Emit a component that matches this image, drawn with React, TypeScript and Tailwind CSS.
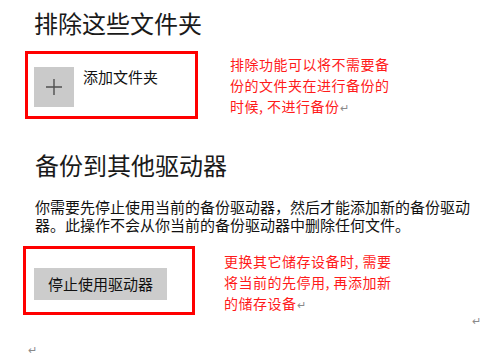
import React from "react";

const cjk = { fontFamily: '"Noto Sans CJK SC", "Noto Sans", sans-serif' };

function Ret() {
  return <span className="text-[11px] text-[#8a8a8a] tracking-normal">↵</span>;
}

export default function App() {
  return (
    <div className="w-[482px] h-[357px] bg-white overflow-hidden relative text-[#1a1a1a]" style={cjk}>
      <div className="pl-[34px] pt-[7px] text-[24px] leading-[32px] text-[#1a1a1a]">排除这些文件夹</div>
      <div className="flex items-start mt-[12px]">
        <div className="ml-[25px] w-[173px] h-[68px] border-[3px] border-[#ff0000] flex items-start pt-[13px] pl-[6px] gap-[9px]">
          <div className="w-[40px] h-[40px] bg-[#cacaca] flex items-center justify-center">
            <svg width="18" height="18" viewBox="0 0 18 18">
              <path d="M9 1v16M1 9h16" stroke="#505050" strokeWidth="1.4" />
            </svg>
          </div>
          <div className="text-[15px] leading-[20px] text-[#111]">添加文件夹</div>
        </div>
        <div className="ml-[32px] mt-[3px] text-[14px] leading-[21px] tracking-[0.5px] text-[#ff1a1a]">
          排除功能可以将不需要备<br />份的文件夹在进行备份的<br />时候, 不进行备份<Ret />
        </div>
      </div>
      <div className="pl-[35px] mt-[30px] text-[24px] leading-[32px]">备份到其他驱动器</div>
      <div className="pl-[35px] mt-[17px] text-[15px] leading-[18px] tracking-[0px] text-[#111] whitespace-nowrap">
        你需要先停止使用当前的备份驱动器，然后才能添加新的备份驱动<br />器。此操作不会从你当前的备份驱动器中删除任何文件。
      </div>
      <div className="flex items-start mt-[12px]">
        <div className="ml-[23px] w-[172px] h-[69px] border-[3px] border-[#ff0000] pt-[19px] pl-[8px]">
          <div className="w-[133px] h-[32px] bg-[#cccccc] flex items-center justify-center text-[15px] text-[#111]">停止使用驱动器</div>
        </div>
        <div className="ml-[29px] mt-[5px] text-[14px] leading-[21px] tracking-[0.5px] text-[#ff1a1a]">
          更换其它储存设备时, 需要<br />将当前的先停用, 再添加新<br />的储存设备<Ret />
        </div>
      </div>
      <div className="absolute left-[472px] top-[311px] leading-[14px]"><Ret /></div>
      <div className="absolute left-[28px] top-[340px] leading-[14px]"><Ret /></div>
    </div>
  );
}
